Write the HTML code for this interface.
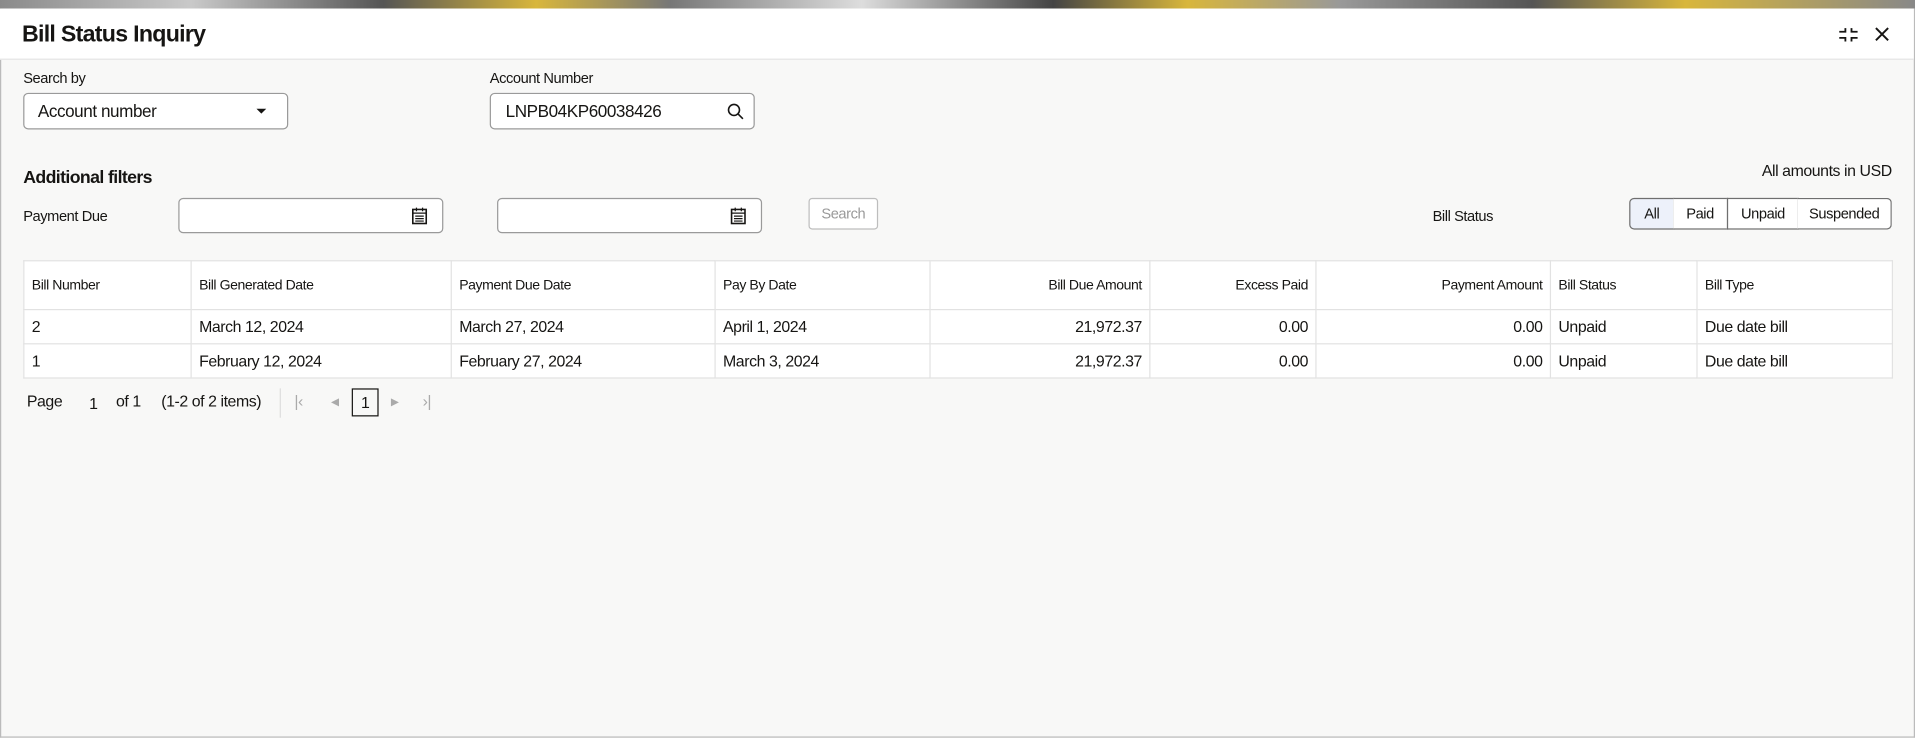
<!DOCTYPE html>
<html><head><meta charset="utf-8"><style>
html,body{margin:0;padding:0;width:1915px;height:738px;overflow:hidden;background:#f6f6f6}
#s{position:absolute;left:0;top:0;width:1568px;height:604px;transform:scale(1.22130);transform-origin:0 0;font-family:"Liberation Sans",sans-serif;color:#161513;letter-spacing:-0.35px}
.a{position:absolute}
.top{left:0;top:0;width:1568px;height:7px;background:linear-gradient(90deg,#8a8a8a 0,#c9c9c9 10%,#555 20%,#d8b63c 28%,#777 35%,#ddd 45%,#444 55%,#d8b63c 62%,#999 70%,#555 80%,#d8b63c 88%,#888 100%)}
.modal{left:0;top:7px;width:1566px;height:596px;border:1px solid #bbb;border-top:none;background:#f8f8f7}
.hdr{left:0;top:7px;width:1567px;height:41px;background:#fff;border-bottom:1px solid #e4e4e4}
.box{position:absolute;border:1px solid #9a9a9a;border-radius:4px;background:#fff;box-sizing:border-box}
.lbl{font-size:12px}
table{position:absolute;left:19px;top:213px;width:1530px;border-collapse:collapse;background:#fff;font-size:13px;table-layout:fixed}
td,th{border:1px solid #e2e2e2;padding:0 6px;white-space:nowrap;overflow:hidden}
th{height:39px;font-weight:normal;font-size:11.5px;text-align:left}
td{height:27px}
.r{text-align:right}
.seg{position:absolute;top:162px;height:26px;box-sizing:border-box;border:1px solid #6f6f6f;font-size:12px;text-align:center;line-height:24px;background:#fff}
</style></head><body><div id="s">
<div class="a top"></div>
<div class="a modal"></div>
<div class="a hdr"></div>
<div class="a" style="left:18px;top:18px;font-size:19px;font-weight:bold;letter-spacing:-0.6px">Bill Status Inquiry</div>
<svg class="a" style="left:1505px;top:20px" width="17" height="17" viewBox="0 0 17 17" fill="none" stroke="#161513" stroke-width="1.5"><path d="M1 6h5V3M11 3v3h5M1 11h5v3M11 14v-3h5"/></svg>
<svg class="a" style="left:1535px;top:22px" width="12" height="12" viewBox="0 0 12 12" stroke="#161513" stroke-width="1.6"><path d="M1 1l10 10M11 1L1 11"/></svg>

<div class="a lbl" style="left:19px;top:57px">Search by</div>
<div class="box" style="left:19px;top:76px;width:217px;height:30px"></div>
<div class="a" style="left:31px;top:83px;font-size:14px">Account number</div>
<svg class="a" style="left:209px;top:88px" width="10" height="6"><path d="M1 1h8L5 5z" fill="#161513"/></svg>
<div class="a lbl" style="left:401px;top:57px">Account Number</div>
<div class="box" style="left:401px;top:76px;width:217px;height:30px"></div>
<div class="a" style="left:414px;top:83px;font-size:14px">LNPB04KP60038426</div>
<svg class="a" style="left:595px;top:84px" width="14" height="14" fill="none" stroke="#161513" stroke-width="1.3"><circle cx="6" cy="6" r="4.5"/><path d="M9.3 9.3l4 4"/></svg>

<div class="a" style="left:19px;top:138px;font-size:14.5px;font-weight:bold;letter-spacing:-0.5px">Additional filters</div>
<div class="a lbl" style="left:19px;top:170px">Payment Due</div>
<div class="box" style="left:146px;top:162px;width:217px;height:29px"></div>
<div class="box" style="left:407px;top:162px;width:217px;height:29px"></div>
<svg class="a" style="left:337px;top:169px" width="13" height="15" fill="none" stroke="#161513" stroke-width="1.3"><rect x="1" y="2.5" width="11" height="11.5"/><path d="M1 5.5h11M4 1v3M9 1v3M3 8h7M3 10h7M3 12h7" stroke-width="1"/></svg>
<svg class="a" style="left:598px;top:169px" width="13" height="15" fill="none" stroke="#161513" stroke-width="1.3"><rect x="1" y="2.5" width="11" height="11.5"/><path d="M1 5.5h11M4 1v3M9 1v3M3 8h7M3 10h7M3 12h7" stroke-width="1"/></svg>
<div class="a" style="left:662px;top:162px;width:57px;height:26px;box-sizing:border-box;border:1px solid #bdbdbd;border-radius:3px;background:#fff;color:#9a9a9a;font-size:12px;text-align:center;line-height:24px">Search</div>

<div class="a" style="right:19px;top:132px;font-size:13px">All amounts in USD</div>
<div class="a lbl" style="left:1173px;top:170px">Bill Status</div>
<div class="seg" style="left:1334px;width:37px;background:#edf1fa;border-radius:4px 0 0 4px">All</div>
<div class="seg" style="left:1370px;width:45px;border-left:none">Paid</div>
<div class="seg" style="left:1414px;width:59px">Unpaid</div>
<div class="seg" style="left:1472px;width:77px;border-left:none;border-radius:0 4px 4px 0">Suspended</div>

<table>
<colgroup><col style="width:137px"><col style="width:213px"><col style="width:216px"><col style="width:176px"><col style="width:180px"><col style="width:136px"><col style="width:192px"><col style="width:120px"><col style="width:160px"></colgroup>
<tr><th>Bill Number</th><th>Bill Generated Date</th><th>Payment Due Date</th><th>Pay By Date</th><th class="r">Bill Due Amount</th><th class="r">Excess Paid</th><th class="r">Payment Amount</th><th>Bill Status</th><th>Bill Type</th></tr>
<tr><td>2</td><td>March 12, 2024</td><td>March 27, 2024</td><td>April 1, 2024</td><td class="r">21,972.37</td><td class="r">0.00</td><td class="r">0.00</td><td>Unpaid</td><td>Due date bill</td></tr>
<tr><td>1</td><td>February 12, 2024</td><td>February 27, 2024</td><td>March 3, 2024</td><td class="r">21,972.37</td><td class="r">0.00</td><td class="r">0.00</td><td>Unpaid</td><td>Due date bill</td></tr>
</table>

<div class="a" style="left:22px;top:321px;font-size:13px">Page</div>
<div class="a" style="left:73px;top:323px;font-size:13px">1</div>
<div class="a" style="left:95px;top:321px;font-size:13px">of 1</div>
<div class="a" style="left:132px;top:321px;font-size:13px">(1-2 of 2 items)</div>
<div class="a" style="left:229px;top:318px;width:1px;height:24px;background:#ddd"></div>
<div class="a" style="left:241px;top:321px;font-size:13px;color:#aaa">|&lsaquo;</div>
<div class="a" style="left:271px;top:321px;font-size:13px;color:#aaa">&#9666;</div>
<div class="a" style="left:288px;top:318px;width:22px;height:23px;border:1px solid #161513;box-sizing:border-box;font-size:13px;text-align:center;line-height:21px">1</div>
<div class="a" style="left:320px;top:321px;font-size:13px;color:#aaa">&#9656;</div>
<div class="a" style="left:346px;top:321px;font-size:13px;color:#aaa">&rsaquo;|</div>
</div></body></html>
